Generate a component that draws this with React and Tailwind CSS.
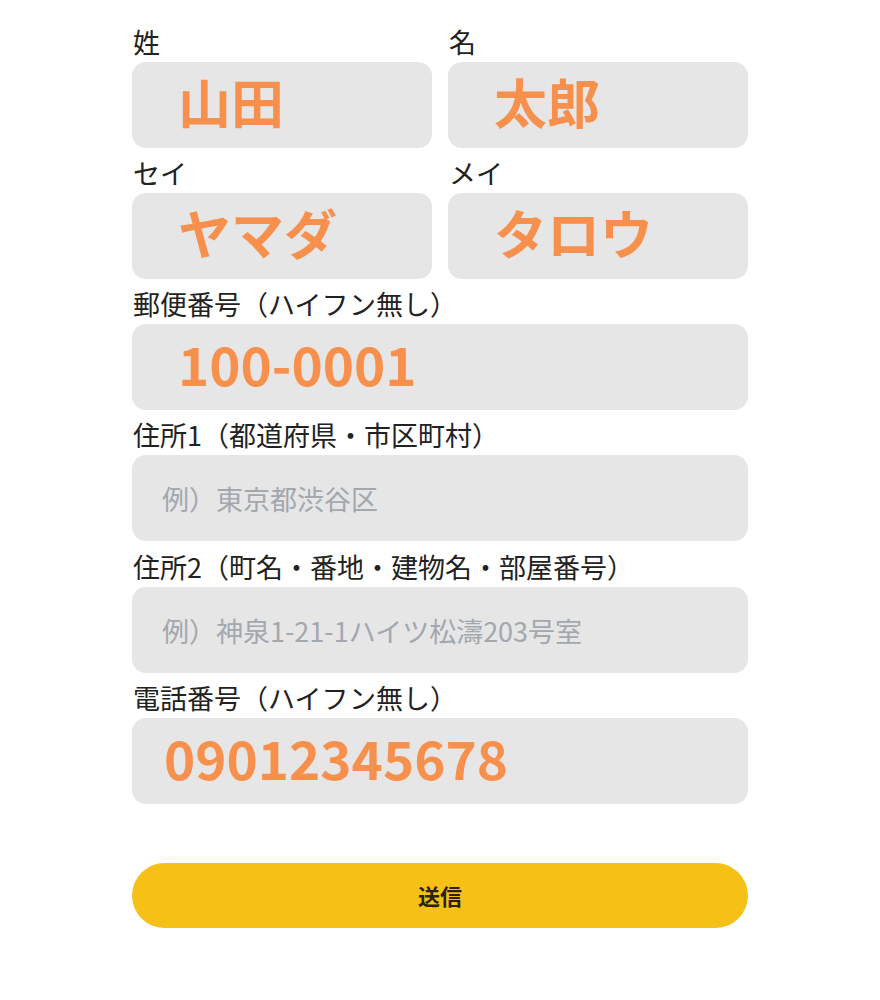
import React from "react";

const font = { fontFamily: '"Noto Sans CJK JP", "Noto Sans", sans-serif' };

function Label({ children }) {
  return (
    <div className="text-[27px] leading-[30px] text-[#222222] mb-[5px] pl-[1px]">{children}</div>
  );
}

function Box({ value, placeholder, pl = "pl-[46px]" }) {
  return (
    <div className={`h-[86px] rounded-[14px] bg-[#e6e6e6] flex items-center ${pl}`}>
      {value ? (
        <span className="text-[53px] font-bold text-[#f7904d] leading-none pb-[7px]">{value}</span>
      ) : (
        <span className="text-[27px] text-[#a3a7ae] leading-none">{placeholder}</span>
      )}
    </div>
  );
}

export default function App() {
  return (
    <div className="w-[880px] h-[1000px] bg-white" style={font}>
      <div className="w-[616px] ml-[132px] pt-[27px] flex flex-col">
        <div className="grid grid-cols-2 gap-x-[16px]">
          <div>
            <Label>姓</Label>
            <Box value="山田" />
          </div>
          <div>
            <Label>名</Label>
            <Box value="太郎" />
          </div>
        </div>
        <div className="grid grid-cols-2 gap-x-[16px] mt-[10px]">
          <div>
            <Label>セイ</Label>
            <Box value="ヤマダ" />
          </div>
          <div>
            <Label>メイ</Label>
            <Box value="タロウ" />
          </div>
        </div>
        <div className="mt-[10px]">
          <Label>郵便番号（ハイフン無し）</Label>
          <Box value="100-0001" />
        </div>
        <div className="mt-[10px]">
          <Label>住所1（都道府県・市区町村）</Label>
          <Box placeholder="例）東京都渋谷区" pl="pl-[30px]" />
        </div>
        <div className="mt-[11px]">
          <Label>住所2（町名・番地・建物名・部屋番号）</Label>
          <Box placeholder="例）神泉1-21-1ハイツ松濤203号室" pl="pl-[30px]" />
        </div>
        <div className="mt-[10px]">
          <Label>電話番号（ハイフン無し）</Label>
          <Box value="09012345678" pl="pl-[32px]" />
        </div>
        <button className="mt-[59px] h-[65px] w-full rounded-full bg-[#f6c117] text-[22px] font-bold text-[#2b2111]">
          送信
        </button>
      </div>
    </div>
  );
}
